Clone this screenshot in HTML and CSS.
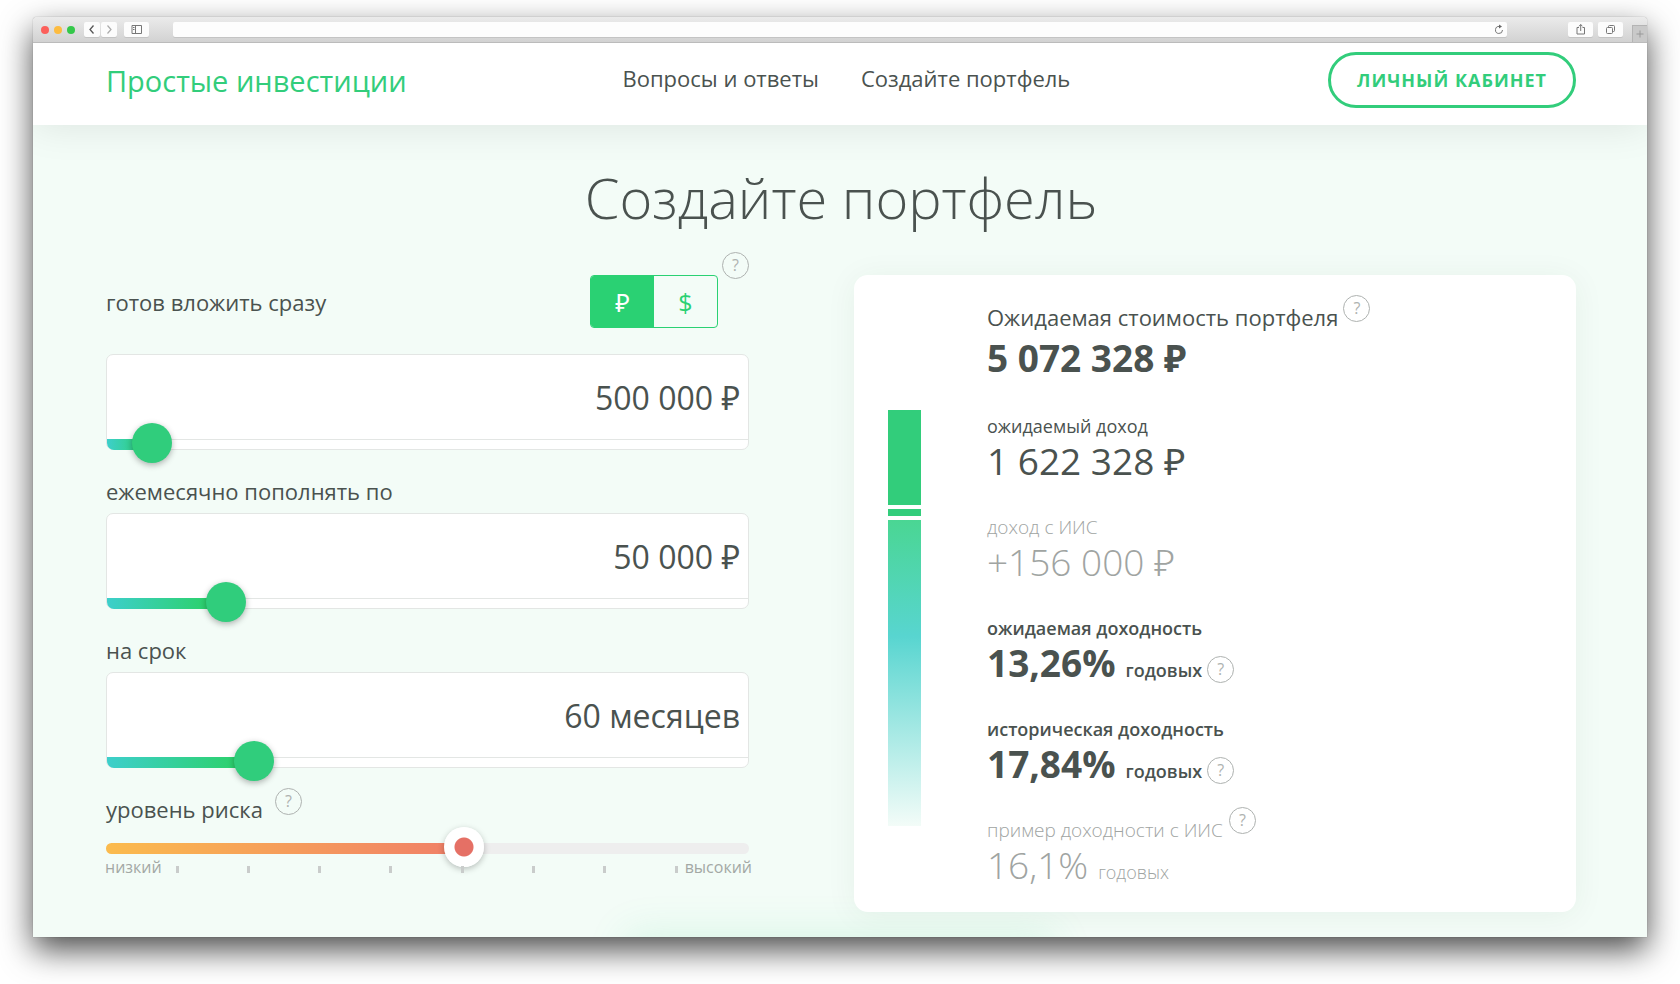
FILE: index.html
```html
<!DOCTYPE html>
<html lang="ru">
<head>
<meta charset="utf-8">
<title>Простые инвестиции</title>
<meta name="viewport" content="width=device-width, initial-scale=1">
<link rel="stylesheet" href="styles.css">
</head>
<body>
<div class="window">
  <div class="toolbar">
    <div class="lights">
      <span class="light light-close"></span>
      <span class="light light-min"></span>
      <span class="light light-max"></span>
    </div>
    <div class="history">
      <button class="tool tool-small" type="button" aria-label="Назад"><svg width="16" height="15" viewBox="0 0 16 15"><path d="M9.5 3.5 6 7.5l3.500 4" stroke="#555" stroke-width="1.300"/></svg></button>
      <button class="tool tool-small" type="button" aria-label="Вперёд"><svg width="16" height="15" viewBox="0 0 16 15"><path d="M6.500 3.500 10 7.500l-3.500 4" stroke="#aaa" stroke-width="1.200"/></svg></button>
    </div>
    <button class="tool" type="button" aria-label="Боковая панель"><svg width="25" height="15" viewBox="0 0 25 15"><path d="M8 3.500h9.500v8H8zM11.500 3.500v8M9 5.500h1.500M9 7.500h1.500" stroke="#777"/></svg></button>
    <div class="address">
      <input class="address-input" type="text" aria-label="Адрес">
      <button class="reload" type="button" aria-label="Обновить"><svg width="10" height="12" viewBox="0 0 10 12"><path d="M5.500 2.500A3.500 3.500 0 1 0 8.500 6" stroke="#777"/><path d="M5 .5v4l3-2z" fill="#666"/></svg></button>
    </div>
    <div class="tools">
      <button class="tool" type="button" aria-label="Поделиться"><svg width="25" height="15" viewBox="0 0 25 15"><path d="M11 5.500H9v6.500h7.500V5.500h-2M12.700 9V2.500M11 4.300l1.700-1.800 1.700 1.800" stroke="#777"/></svg></button>
      <button class="tool" type="button" aria-label="Вкладки"><svg width="25" height="15" viewBox="0 0 25 15"><rect x="8.500" y="5.500" width="6" height="6" rx="1" stroke="#777"/><path d="M10.500 5V4.500a1 1 0 0 1 1-1h4a1 1 0 0 1 1 1v4a1 1 0 0 1-1 1H15" stroke="#777"/></svg></button>
      <button class="new-tab" type="button" aria-label="Новая вкладка"><svg width="14" height="16" viewBox="0 0 14 16"><path d="M7 4.500v7M3.500 8h7" stroke="#999"/></svg></button>
    </div>
  </div>

  <header class="header">
    <a class="logo" href="#">Простые инвестиции</a>
    <nav class="nav">
      <a class="nav-link" href="#">Вопросы и ответы</a>
      <a class="nav-link" href="#">Создайте портфель</a>
    </nav>
    <button class="account" type="button">ЛИЧНЫЙ КАБИНЕТ</button>
  </header>

  <main class="main">
    <h1 class="title">Создайте портфель</h1>
    <div class="columns">
      <form class="form">
        <div class="start">
          <label class="label" for="sum">готов вложить сразу</label>
          <div class="currency">
            <button class="currency-item currency-active" type="button">₽</button>
            <button class="currency-item" type="button">$</button>
          </div>
          <button class="help help-top" type="button">?</button>
        </div>
        <div class="box">
          <input class="value" id="sum" type="text" value="500 000 ₽">
          <input class="range" type="range" aria-label="готов вложить сразу" min="0" max="12000000" step="10000" value="500000" style="--fill:7%">
        </div>
        <label class="label label-row" for="monthly">ежемесячно пополнять по</label>
        <div class="box">
          <input class="value" id="monthly" type="text" value="50 000 ₽">
          <input class="range" type="range" aria-label="ежемесячно пополнять по" min="0" max="304000" step="1000" value="50000" style="--fill:18%">
        </div>
        <label class="label label-row" for="term">на срок</label>
        <div class="box">
          <input class="value" id="term" type="text" value="60 месяцев">
          <input class="range" type="range" aria-label="на срок" min="0" max="285" value="60" style="--fill:23%">
        </div>
        <div class="risk-head">
          <label class="label" for="risk">уровень риска</label>
          <button class="help" type="button">?</button>
        </div>
        <input class="risk" id="risk" type="range" min="0" max="100" value="56" style="--fill:55%">
        <div class="scale">
          <span>низкий</span>
          <div class="ticks"><i></i><i></i><i></i><i></i><i></i><i></i><i></i><i></i></div>
          <span>высокий</span>
        </div>
      </form>

      <section class="card">
        <div class="chart">
          <div class="bar bar-income"></div>
          <div class="bar bar-bonus"></div>
          <div class="bar bar-invested"></div>
        </div>
        <div class="stats">
          <div class="stat stat-main">
            <div class="stat-label">Ожидаемая стоимость портфеля<button class="help help-raised" type="button">?</button></div>
            <div class="stat-value strong">5 072 328 ₽</div>
          </div>
          <div class="stat">
            <div class="stat-label">ожидаемый доход</div>
            <div class="stat-value">1 622 328 ₽</div>
          </div>
          <div class="stat muted">
            <div class="stat-label">доход с ИИС</div>
            <div class="stat-value">+156 000 ₽</div>
          </div>
          <div class="stat">
            <div class="stat-label semi">ожидаемая доходность</div>
            <div class="stat-value strong">13,26% <span class="unit">годовых</span><button class="help help-unit" type="button">?</button></div>
          </div>
          <div class="stat">
            <div class="stat-label semi">историческая доходность</div>
            <div class="stat-value strong">17,84% <span class="unit">годовых</span><button class="help help-unit" type="button">?</button></div>
          </div>
          <div class="stat muted">
            <div class="stat-label">пример доходности с ИИС<button class="help help-raised help-far" type="button">?</button></div>
            <div class="stat-value">16,1% <span class="unit">годовых</span></div>
          </div>
        </div>
      </section>
    </div>
  </main>
</div>
</body>
</html>
```
FILE: styles.css
```css
* {
  box-sizing: border-box;
}

body {
  margin: 0;
  padding: 17px 33px 47px;
  background: #fff;
  color: #4a524f;
  font-family: "Open Sans", "Noto Sans", sans-serif;
}

button,
input {
  margin: 0;
  padding: 0;
  border: 0;
  background: none;
  color: inherit;
  font: inherit;
}

a {
  color: inherit;
  text-decoration: none;
}

svg {
  display: block;
  fill: none;
}

.window {
  border-radius: 4px 4px 0 0;
  box-shadow: 0 0 1px rgba(0, 0, 0, 0.5), 0 13px 32px rgba(0, 0, 0, 0.7);
}

/* Browser toolbar */
.toolbar {
  display: flex;
  align-items: center;
  height: 26px;
  padding-left: 8px;
  border-bottom: 1px solid #bbb;
  border-radius: 4px 4px 0 0;
  background: linear-gradient(#ebebeb, #d2d2d2);
}

.lights {
  display: flex;
  gap: 5px;
  margin-right: 9px;
}

.light {
  width: 8px;
  height: 8px;
  border-radius: 50%;
}

.light-close { background: #fc605b; }
.light-min { background: #fdbc40; }
.light-max { background: #34c84a; }

.history {
  display: flex;
  gap: 1px;
  margin-right: 7px;
}

.tool {
  width: 25px;
  height: 15px;
  border-radius: 2px;
  background: #fcfcfc;
  box-shadow: 0 1px 0 #c4c4c4;
}

.tool-small {
  width: 16px;
}

.address {
  display: flex;
  align-items: center;
  flex: 1;
  height: 15px;
  margin: 0 61px 0 24px;
  padding-right: 3px;
  border-radius: 2px;
  background: #fdfdfd;
  box-shadow: 0 1px 0 #c4c4c4;
}

.address-input {
  flex: 1;
  height: 15px;
  font-size: 11px;
}

.tools {
  display: flex;
  align-items: center;
  align-self: stretch;
  gap: 5px;
}

.new-tab {
  align-self: flex-end;
  width: 15px;
  height: 17px;
  margin-left: 4px;
  border: 1px solid #b4b4b4;
  border-width: 1px 0 0 1px;
  background: #c9c9c9;
}

/* Site header */
.header {
  position: relative;
  z-index: 1;
  display: grid;
  grid-template-columns: 35% 1fr auto;
  align-items: start;
  padding: 9px 71px 17px 73px;
  background: #fff;
  box-shadow: 0 0 40px rgba(0, 0, 0, 0.1);
  clip-path: inset(0 0 -60px 0);
}

.logo {
  margin-top: 9px;
  color: #32cd7b;
  font-size: 29px;
  line-height: 40px;
}

.nav {
  display: flex;
  gap: 42px;
  margin-top: 10px;
  font-size: 22px;
  line-height: 32px;
}

.nav-link:first-child {
  margin-left: 2px;
}

.account {
  height: 56px;
  padding: 0 26px;
  border: 3px solid #32cd7b;
  border-radius: 28px;
  color: #32cd7b;
  font-size: 18px;
  font-weight: 700;
  letter-spacing: 1px;
}

/* Calculator */
.main {
  position: relative;
  overflow: hidden;
  padding: 32px 71px 25px 73px;
  background: #f3fcf7;
}

/* Glow of the panel that continues below the fold */
.main::after {
  content: "";
  position: absolute;
  top: 100%;
  left: 0;
  right: 0;
  width: 26%;
  height: 56px;
  margin: 0 auto;
  box-shadow: 0 0 40px 4px rgba(50, 205, 123, 0.13);
}

.title {
  margin: 0 0 38px;
  font-size: 56px;
  font-weight: 300;
  line-height: 80px;
  text-align: center;
}

.columns {
  position: relative;
  z-index: 1;
  display: grid;
  grid-template-columns: 643fr 722fr;
  gap: 105px;
}

.label {
  font-size: 22px;
  line-height: 32px;
}

.label-row {
  display: block;
  margin: 25px 0 6px;
}

.start {
  display: flex;
  align-items: center;
  height: 53px;
  margin-bottom: 26px;
}

.currency {
  display: flex;
  width: 128px;
  height: 53px;
  margin-left: auto;
  overflow: hidden;
  border: 1px solid #2ad173;
  border-radius: 4px;
}

.currency-item {
  flex: 1;
  color: #2ad173;
  font-size: 25px;
}

.currency-active {
  background: #2ad173;
  color: #fff;
}

.help {
  flex: none;
  width: 27px;
  height: 27px;
  border: 1px solid #aeb2b0;
  border-radius: 50%;
  color: #aeb2b0;
  font-size: 16px;
  font-weight: 400;
  line-height: 25px;
  text-align: center;
}

.help-top {
  align-self: flex-start;
  margin: -23px 0 0 4px;
}

.box {
  height: 96px;
  border: 1px solid #e3e6e4;
  border-radius: 7px;
  background: #fff;
}

.value {
  display: block;
  width: 100%;
  height: 85px;
  padding-right: 8px;
  border-bottom: 1px solid #e3e6e4;
  font-size: 32px;
  text-align: right;
}

.range,
.risk {
  display: block;
  appearance: none;
  background: linear-gradient(90deg, #3dcfcb, #2ad15f) 0 0 / var(--fill) 100% no-repeat;
}

.range {
  width: 100%;
  height: 11px;
  margin-top: -1px;
  border-radius: 0 0 7px 7px;
}

.range::-webkit-slider-runnable-track {
  height: 11px;
}

.range::-webkit-slider-thumb {
  appearance: none;
  width: 40px;
  height: 40px;
  margin-top: -16px;
  border-radius: 50%;
  background: #30cd7c;
  box-shadow: 0 2px 6px rgba(0, 0, 0, 0.3);
}

.risk-head {
  display: flex;
  gap: 12px;
  margin: 25px 0 18px;
}

.risk-head .help {
  margin-top: -5px;
}

.risk {
  width: 100%;
  height: 11px;
  border-radius: 6px;
  background-color: #eee;
  background-image: linear-gradient(90deg, #fbbb4d, #f07f68);
}

.risk::-webkit-slider-runnable-track {
  height: 11px;
}

.risk::-webkit-slider-thumb {
  appearance: none;
  width: 40px;
  height: 40px;
  margin-top: -16px;
  border-radius: 50%;
  background: radial-gradient(circle, #e57065 9px, #fff 10px);
  box-shadow: 0 2px 6px rgba(0, 0, 0, 0.25);
}

.scale {
  display: flex;
  align-items: center;
  margin: 2px -3px 0 -1px;
  color: #a3a8a5;
  font-size: 16px;
  line-height: 22px;
}

.ticks {
  display: flex;
  flex: 1;
  justify-content: space-between;
  margin: 4px 7px 0 14px;
}

.ticks i {
  width: 3px;
  height: 7px;
  background: #c9cccb;
}

/* Result card */
.card {
  display: grid;
  grid-template-columns: 33px 1fr;
  gap: 66px;
  padding: 26px 34px 26px;
  border-radius: 14px;
  background: #fff;
  box-shadow: 0 3px 32px rgba(0, 60, 30, 0.06);
}

.chart {
  display: flex;
  flex-direction: column;
  gap: 4px;
  padding: 109px 0 60px;
}

.bar-income {
  flex: 95;
  background: #32cd7b;
}

.bar-bonus {
  flex: 7;
  background: #32cd7b;
}

.bar-invested {
  flex: 306;
  background: linear-gradient(#4ad693, #58d5d0 38%, #f3fcf8);
}

.stat {
  margin-bottom: 31px;
}

.stat:last-child {
  margin-bottom: 0;
}

.stat-label {
  display: flex;
  font-size: 18px;
  line-height: 28px;
}

.stat-main {
  margin-bottom: 33px;
}

.stat-main .stat-label {
  margin-bottom: 4px;
  font-size: 22px;
  line-height: 32px;
}

.stat-value {
  display: flex;
  align-items: baseline;
  font-size: 37px;
  line-height: 42px;
}

.semi {
  font-weight: 600;
}

.strong {
  font-weight: 700;
}

.unit {
  margin-left: 10px;
  font-size: 18px;
  line-height: 20px;
}

.strong .unit {
  font-weight: 600;
}

.muted {
  color: #a0a4a2;
  font-weight: 300;
}

.muted .stat-label {
  font-size: 19px;
}

.help-raised {
  margin: -6px 0 0 5px;
}

.help-far {
  margin: -9px 0 0 6px;
}

.help-unit {
  align-self: flex-end;
  margin: 0 0 1px 5px;
}
```
